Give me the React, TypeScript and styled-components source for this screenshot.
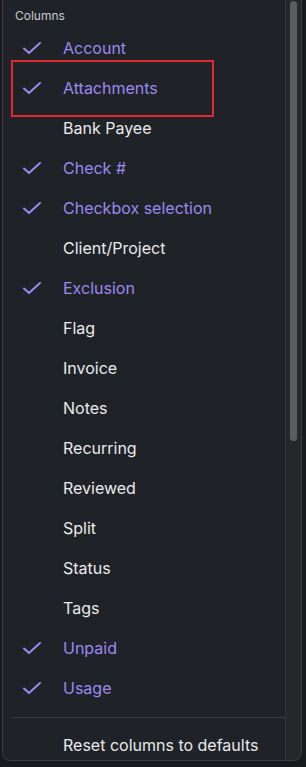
import React from "react";
import styled, { createGlobalStyle } from "styled-components";

const Global = createGlobalStyle`
  html, body { margin: 0; padding: 0; background: #17191c; }
  body { font-family: Inter, "Noto Sans", sans-serif; overflow: hidden; }
`;

const Page = styled.div`
  position: relative;
  width: 306px;
  height: 767px;
  padding-left: 2px;
  box-sizing: border-box;
  overflow: hidden;
`;

const Menu = styled.div`
  margin-top: -12px;
  width: 300px;
  height: 773px;
  box-sizing: border-box;
  border: 1px solid #3a3d42;
  border-radius: 8px;
  background: #1f2226;
  display: flex;
  overflow: hidden;
`;

const Content = styled.div`
  flex: 1;
  padding-top: 12px;
  display: flex;
  flex-direction: column;
  min-height: 0;
`;

const Header = styled.div`
  flex-shrink: 0;
  height: 27px;
  display: flex;
  align-items: center;
  padding: 2px 0 0 12px;
  box-sizing: border-box;
  font-size: 12px;
  color: #c9cbce;
`;

const Row = styled.div<{ $on: boolean; $gap?: number }>`
  flex-shrink: 0;
  height: 40px;
  margin-top: ${(p) => p.$gap ?? 0}px;
  display: flex;
  align-items: center;
  font-size: 16px;
  color: ${(p) => (p.$on ? "#9d88f2" : "#e9eaec")};
`;

const CheckSlot = styled.div`
  width: 60px;
  display: flex;
  align-items: center;
  padding-left: 19px;
  box-sizing: border-box;
`;

const Divider = styled.div`
  flex-shrink: 0;
  height: 1px;
  background: #3a3d42;
  margin: 9px 0 0 9px;
`;

const Track = styled.div`
  width: 15px;
  border-left: 1px solid #2f3236;
  background: #262729;
  padding-top: 12px;
  display: flex;
  justify-content: center;
`;

const Thumb = styled.div`
  width: 7px;
  height: 440px;
  border-radius: 4px;
  background: #5d5d5e;
`;

const Highlight = styled.div`
  position: absolute;
  left: 11px;
  top: 60px;
  width: 203px;
  height: 57px;
  box-sizing: border-box;
  border: 2px solid #e0282d;
  pointer-events: none;
`;

const Check = () => (
  <svg width="20" height="14" viewBox="0 0 20 14">
    <path d="M2 7.5 L7 12 L18 2" fill="none" stroke="#9d88f2" strokeWidth="2" strokeLinecap="round" strokeLinejoin="round" />
  </svg>
);

const items: [string, boolean][] = [
  ["Account", true],
  ["Attachments", true],
  ["Bank Payee", false],
  ["Check #", true],
  ["Checkbox selection", true],
  ["Client/Project", false],
  ["Exclusion", true],
  ["Flag", false],
  ["Invoice", false],
  ["Notes", false],
  ["Recurring", false],
  ["Reviewed", false],
  ["Split", false],
  ["Status", false],
  ["Tags", false],
  ["Unpaid", true],
  ["Usage", true],
];

export default function App() {
  return (
    <Page>
      <Global />
      <Menu>
        <Content>
          <Header>Columns</Header>
          {items.map(([label, on]) => (
            <Row key={label} $on={on}>
              <CheckSlot>{on && <Check />}</CheckSlot>
              {label}
            </Row>
          ))}
          <Divider />
          <Row $on={false} $gap={7}>
            <CheckSlot />
            Reset columns to defaults
          </Row>
        </Content>
        <Track>
          <Thumb />
        </Track>
      </Menu>
      <Highlight />
    </Page>
  );
}
